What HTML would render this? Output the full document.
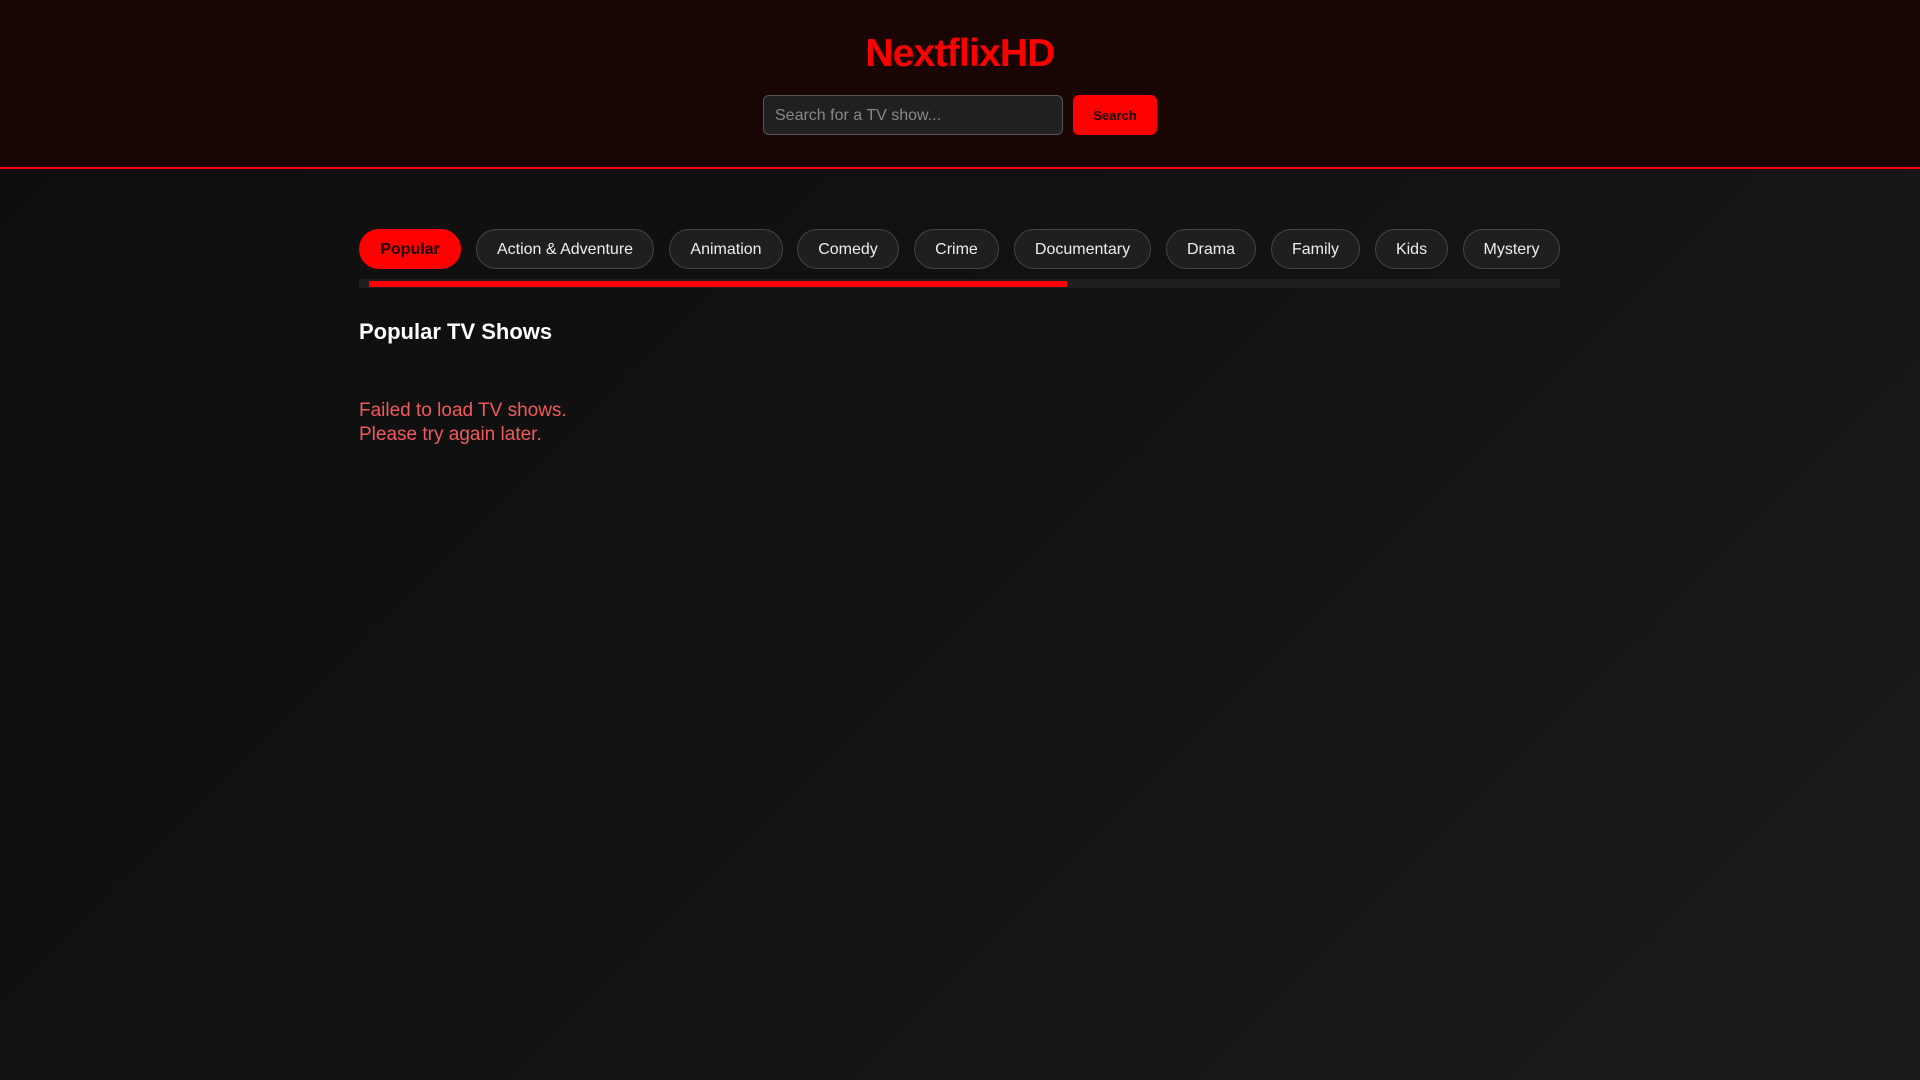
<!DOCTYPE html>
<html><head><meta charset="utf-8"><style>
*{margin:0;padding:0;box-sizing:border-box}
html,body{width:1920px;height:1080px;overflow:hidden}
body{background:linear-gradient(135deg,#0e0e0e 0%,#121212 50%,#1b1b1b 100%);font-family:"Liberation Sans",Arial,sans-serif;color:#fff;position:relative}
header{position:absolute;left:0;top:0;width:1920px;height:169px;background:#1a0505;border-bottom:2px solid #ff0000}
.logo{position:absolute;left:0;width:1920px;top:32px;text-align:center;font-size:39px;font-weight:bold;color:#ff0000;letter-spacing:-0.8px}
.input{position:absolute;left:763px;top:95px;width:300px;height:40px;background:#202020;border:1px solid #555;border-radius:6px;color:#888;font-size:16px;padding:0 11px;line-height:39px}
.btn{position:absolute;left:1073px;top:95px;width:84px;height:40px;background:#ff0000;border-radius:6px;color:#1a0000;font-weight:bold;font-size:13px;text-align:center;line-height:41px}
.pill{position:absolute;top:229px;height:40px;border:1px solid #444;background:#1f1f1f;border-radius:20px;text-align:center;line-height:40px;font-size:16px;color:#eee;white-space:nowrap;overflow:hidden}
.pill.act{background:#ff0000;border-color:#ff0000;color:#1a0000;font-weight:bold}
.track{position:absolute;left:359px;top:279px;width:1201px;height:9px;background:#1e1e1e}
.thumb{position:absolute;left:369px;top:281px;width:698px;height:6px;background:#ff0000}
h2{position:absolute;left:359px;top:319px;font-size:22px;font-weight:bold}
.err{position:absolute;left:359px;top:399px;font-size:19px;line-height:24px;color:#f05a5a}
</style></head><body>
<header>
<div class="logo">NextflixHD</div>
<div class="input">Search for a TV show...</div>
<div class="btn">Search</div>
</header>
<div class="pill act" style="left:359px;width:102px">Popular</div>
<div class="pill" style="left:476px;width:178px">Action &amp; Adventure</div>
<div class="pill" style="left:669px;width:114px">Animation</div>
<div class="pill" style="left:797px;width:102px">Comedy</div>
<div class="pill" style="left:914px;width:85px">Crime</div>
<div class="pill" style="left:1014px;width:137px">Documentary</div>
<div class="pill" style="left:1166px;width:90px">Drama</div>
<div class="pill" style="left:1271px;width:89px">Family</div>
<div class="pill" style="left:1375px;width:73px">Kids</div>
<div class="pill" style="left:1463px;width:97px">Mystery</div>
<div class="track"></div><div class="thumb"></div>
<h2>Popular TV Shows</h2>
<div class="err">Failed to load TV shows.<br>Please try again later.</div>
</body></html>
